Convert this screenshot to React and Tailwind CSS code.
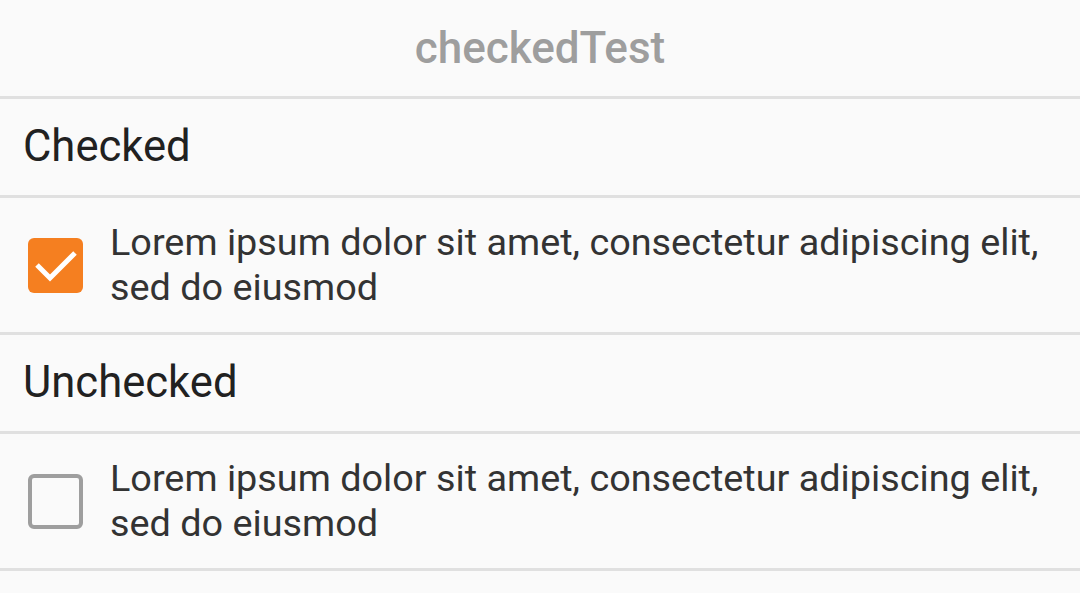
import React from 'react';

const LOREM = 'Lorem ipsum dolor sit amet, consectetur adipiscing elit, sed do eiusmod';

function CheckBox({ checked }) {
  if (checked) {
    return (
      <div className="w-[55px] h-[55px] shrink-0 rounded-[6px] bg-[#f57f20] flex items-center justify-center">
        <svg width="55" height="55" viewBox="0 0 55 55">
          <path d="M9 27 L22 40 L47 15" fill="none" stroke="#fff" strokeWidth="5" />
        </svg>
      </div>
    );
  }
  return <div className="w-[55px] h-[55px] shrink-0 rounded-[6px] border-[4px] border-[#9e9e9e]" />;
}

function SectionLabel({ children }) {
  return (
    <div className="h-[99px] pl-[23px] flex items-center border-b-[3px] border-[#e0e0e0] text-[43.6px] text-[#212121]">
      {children}
    </div>
  );
}

function CheckRow({ checked }) {
  return (
    <div className="h-[137px] flex items-center border-b-[3px] border-[#e0e0e0]">
      <div className="pl-[28px] pr-[27px]">
        <CheckBox checked={checked} />
      </div>
      <p className="text-[37.8px] leading-[45px] text-[#333333] pr-[30px]">{LOREM}</p>
    </div>
  );
}

export default function App() {
  return (
    <div className="w-[1080px] h-[593px] overflow-hidden bg-[#fafafa]" style={{ fontFamily: 'Roboto, sans-serif' }}>
      <div className="h-[99px] flex items-center justify-center border-b-[3px] border-[#e0e0e0]">
        <span className="text-[44px] font-medium text-[#9e9e9e]">checkedTest</span>
      </div>
      <SectionLabel>Checked</SectionLabel>
      <CheckRow checked />
      <SectionLabel>Unchecked</SectionLabel>
      <CheckRow checked={false} />
    </div>
  );
}
